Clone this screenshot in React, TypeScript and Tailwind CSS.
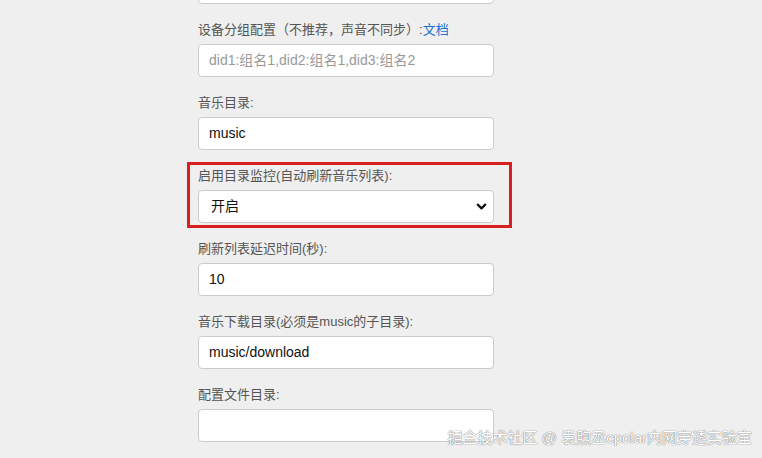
import { ChevronDown } from "lucide-react";

const font = { fontFamily: '"Liberation Sans", Arial, "Noto Sans CJK SC", sans-serif' };

function Label({ children }: { children: React.ReactNode }) {
  return <div className="h-[14px] text-[13px] leading-[14px] text-[#555]">{children}</div>;
}

function Field({ value, placeholder }: { value?: string; placeholder?: string }) {
  return (
    <div className="mt-[7px] flex h-[33px] items-center rounded-[4px] border border-[#ccc] bg-white px-[10px] text-[14px]">
      {value ? <span className="text-[#111]">{value}</span> : <span className="text-[#999]">{placeholder}</span>}
    </div>
  );
}

export default function App() {
  return (
    <div className="relative h-[458px] w-[762px] overflow-hidden bg-[#efefef]" style={font}>
      <div className="ml-[198px] flex w-[296px] flex-col">
        <div className="-mt-[29px] h-[33px] rounded-[4px] border border-[#ccc] bg-white" />

        <div className="mt-[19px]">
          <Label>
            设备分组配置（不推荐，声音不同步）:<span className="text-[#1a6fd1]">文档</span>
          </Label>
          <Field placeholder="did1:组名1,did2:组名1,did3:组名2" />
        </div>

        <div className="mt-[19px]">
          <Label>音乐目录:</Label>
          <Field value="music" />
        </div>

        <div className="relative mt-[19px]">
          <div className="pointer-events-none absolute -left-[11px] -right-[18px] -top-[7px] -bottom-[5px] border-[3px] border-[#d9201f]" />
          <Label>启用目录监控(自动刷新音乐列表):</Label>
          <div className="mt-[7px] flex h-[33px] items-center justify-between rounded-[4px] border border-[#ccc] bg-white pl-[12px] pr-[4px] text-[14px] text-[#111]">
            <span>开启</span>
            <ChevronDown className="h-[15px] w-[15px]" strokeWidth={3.5} />
          </div>
        </div>

        <div className="mt-[19px]">
          <Label>刷新列表延迟时间(秒):</Label>
          <Field value="10" />
        </div>

        <div className="mt-[19px]">
          <Label>音乐下载目录(必须是music的子目录):</Label>
          <Field value="music/download" />
        </div>

        <div className="mt-[19px]">
          <Label>配置文件目录:</Label>
          <Field />
        </div>
      </div>

      <div
        className="absolute bottom-[10px] right-[10px] text-[15px] leading-[20px] text-white"
        style={{ textShadow: "0 0 1px #777, 0 0 1px #777" }}
      >
        掘金技术社区 @ 袁煦丞cpolar内网穿透实验室
      </div>
    </div>
  );
}
